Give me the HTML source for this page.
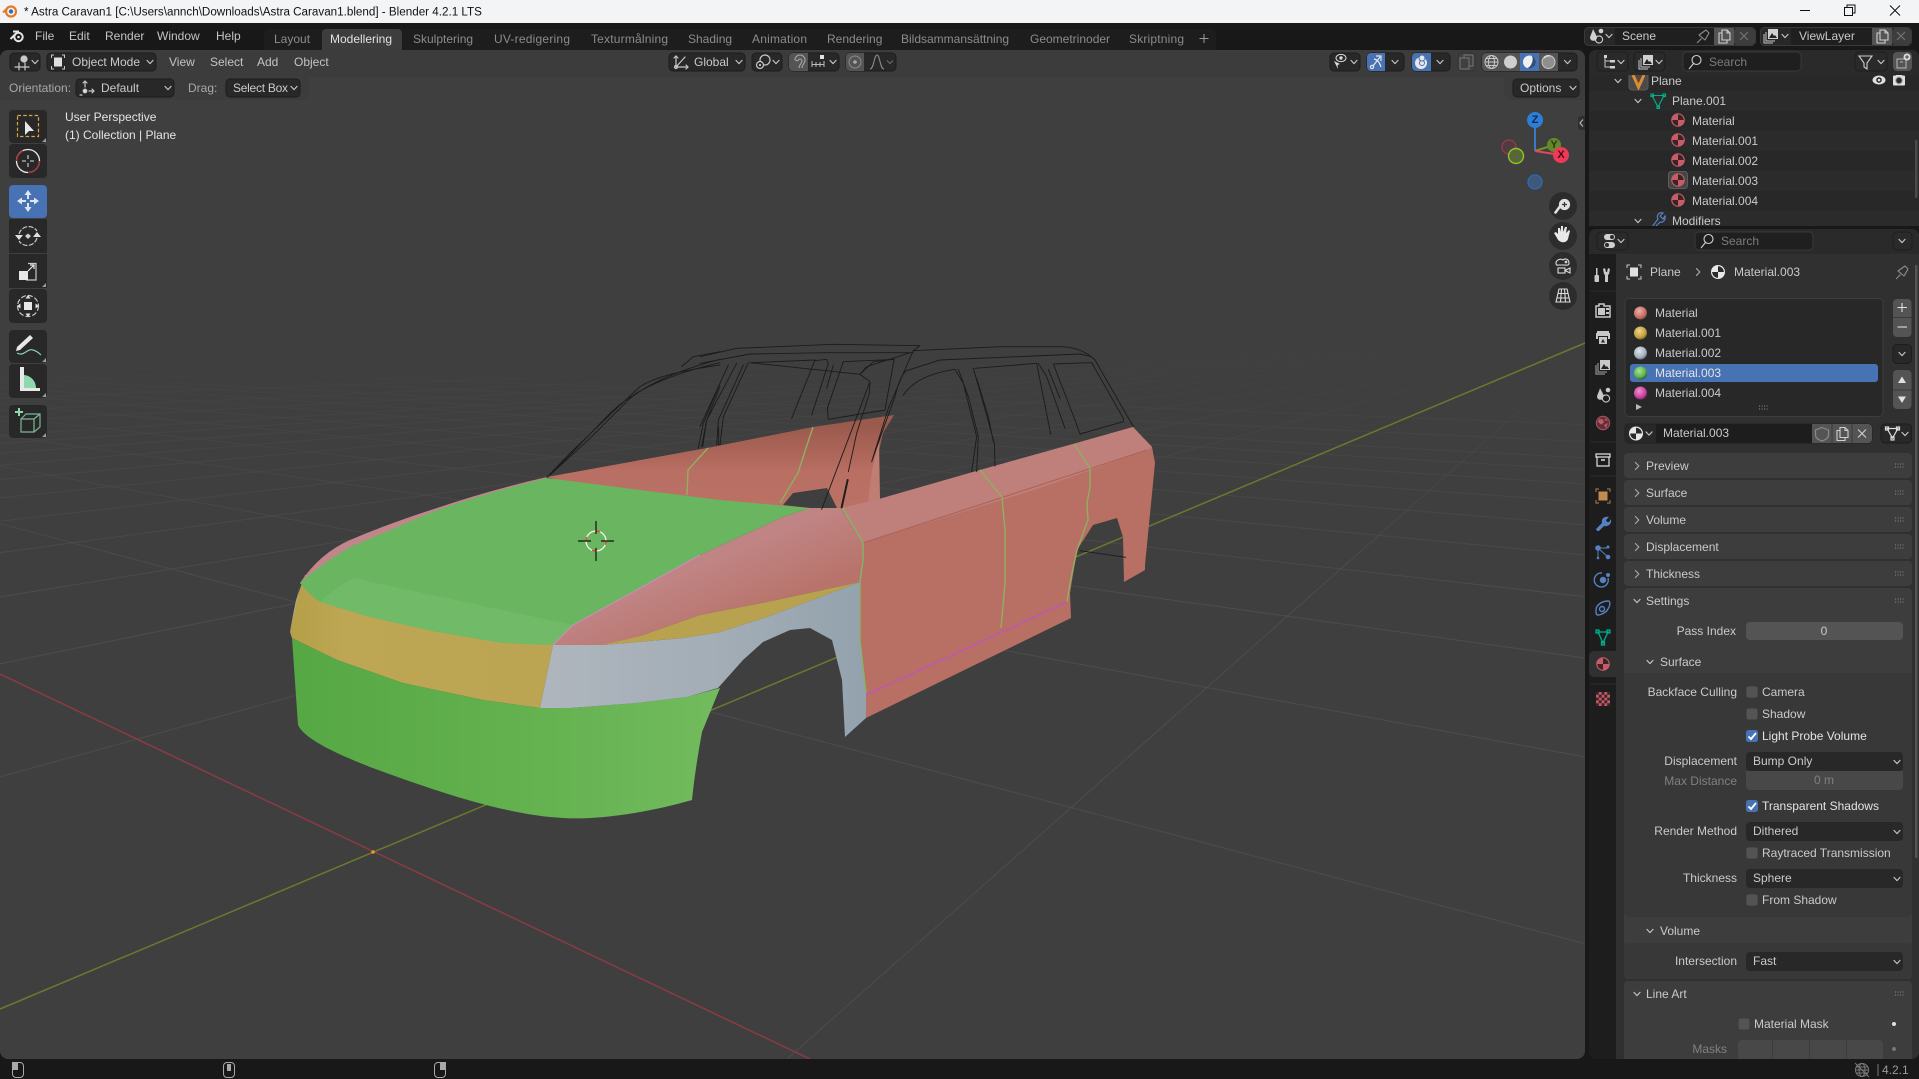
<!DOCTYPE html>
<html><head><meta charset="utf-8"><title>Blender</title>
<style>
html,body{margin:0;padding:0;background:#181818;overflow:hidden}
svg{display:block}
text{font-family:"Liberation Sans",sans-serif;font-size:12px;fill:#cacaca;dominant-baseline:central;white-space:pre}
.m{fill:#c4c4c4}.tb{fill:#8c8c8c}.ta{fill:#e2e2e2}.d{fill:#7c7c7c}.w{fill:#e4e4e4}.r{text-anchor:end}.c{text-anchor:middle}
.k{fill:#111;font-size:11.65px}
.i{fill:none;stroke:#c8c8c8;stroke-width:1.2;stroke-linecap:round;stroke-linejoin:round}
.ch{fill:none;stroke:#c4c4c4;stroke-width:1.2;stroke-linecap:round;stroke-linejoin:round}
.b{fill:#282828;stroke:#1d1d1d;stroke-width:1}
.f{fill:#c8c8c8}
.wr{fill:none;stroke:#1c1c1c;stroke-width:2.8;stroke-linejoin:round;stroke-linecap:round}
</style></head>
<body>
<svg xmlns="http://www.w3.org/2000/svg" width="1919" height="1079" viewBox="0 0 1919 1079">
<defs>
<path id="c" d="M-3-1.6L0 1.6L3-1.6" class="ch"/>
<path id="cr" d="M-1.6-3.5L1.8 0L-1.6 3.5" fill="none" stroke="#a8a8a8" stroke-width="1.2" stroke-linecap="round" stroke-linejoin="round"/>
<g id="mat"><circle r="6.8" fill="#c65c68"/><path d="M-5.6 0H0V5.6A5.600 5.600 0 0 1-5.6 0ZM0 0V-5.6A5.600 5.600 0 0 1 5.600 0Z" fill="#3a2427"/></g>
<g id="matw"><circle r="7" fill="#e8e8e8"/><path d="M-5.800 0H0V5.800A5.800 5.800 0 0 1-5.800 0ZM0 0V-5.800A5.800 5.800 0 0 1 5.800 0Z" fill="#2a2a2a"/></g>
<g id="grip" fill="#8a8a8a"><rect x="-5" y="-2" width="1" height="1"/><rect x="-2.5" y="-2" width="1" height="1"/><rect x="0" y="-2" width="1" height="1"/><rect x="2.5" y="-2" width="1" height="1"/><rect x="-5" y="1" width="1" height="1"/><rect x="-2.5" y="1" width="1" height="1"/><rect x="0" y="1" width="1" height="1"/><rect x="2.5" y="1" width="1" height="1"/></g>
<g id="copy"><path d="M-2-6H3L6-3V4H-2Z M3-6V-3H6 M-2-3H-5V7H3V4" fill="none" stroke="#cfcfcf" stroke-width="1.1"/></g>
<g id="cb"><rect x="-6" y="-6" width="12" height="12" rx="2.5" fill="#545454" stroke="#3a3a3a"/></g>
<g id="cbon"><rect x="-6" y="-6" width="12" height="12" rx="2.5" fill="#4772b3"/><path d="M-3.5 .5L-1 3L4-3" fill="none" stroke="#fff" stroke-width="1.8"/></g>
<g id="pin"><path d="M-6 7L-1.5 2.5 M-4 -1L3-6L6-3L2 4Z" fill="none" stroke="#8d8d8d" stroke-width="1.1" stroke-linejoin="round"/></g>
<g id="mini"><path d="M3 3V-1L-1 3Z" fill="#9a9a9a"/></g>
<linearGradient id="gf" gradientUnits="userSpaceOnUse" x1="0" y1="340" x2="0" y2="600"><stop offset="0" stop-color="#4a4a4a" stop-opacity="0"/><stop offset=".35" stop-color="#4a4a4a" stop-opacity=".45"/><stop offset="1" stop-color="#4c4c4c"/></linearGradient>
<linearGradient id="bump" gradientUnits="userSpaceOnUse" x1="292" y1="0" x2="720" y2="0"><stop offset="0" stop-color="#56a844"/><stop offset=".5" stop-color="#62b04e"/><stop offset="1" stop-color="#72bb5e"/></linearGradient>
<linearGradient id="silv" gradientUnits="userSpaceOnUse" x1="553" y1="0" x2="866" y2="0"><stop offset="0" stop-color="#aeb5bd"/><stop offset=".55" stop-color="#a2adb6"/><stop offset="1" stop-color="#93a2ad"/></linearGradient>
<linearGradient id="yel" gradientUnits="userSpaceOnUse" x1="290" y1="0" x2="553" y2="0"><stop offset="0" stop-color="#b59f48"/><stop offset=".2" stop-color="#bda654"/><stop offset="1" stop-color="#bba552"/></linearGradient>
<linearGradient id="farp" gradientUnits="userSpaceOnUse" x1="0" y1="425" x2="0" y2="510"><stop offset="0" stop-color="#9a5a4e"/><stop offset=".35" stop-color="#ad6659"/><stop offset=".55" stop-color="#b96f63"/><stop offset="1" stop-color="#ba7265"/></linearGradient>
<linearGradient id="fend" gradientUnits="userSpaceOnUse" x1="640" y1="500" x2="700" y2="640"><stop offset="0" stop-color="#c08485"/><stop offset=".55" stop-color="#c08484"/><stop offset="1" stop-color="#b8736a"/></linearGradient>
<linearGradient id="side" gradientUnits="userSpaceOnUse" x1="960" y1="470" x2="985" y2="540"><stop offset="0" stop-color="#c08280"/><stop offset=".72" stop-color="#bd7c78"/><stop offset=".78" stop-color="#b4695d"/><stop offset="1" stop-color="#b96f64"/></linearGradient>
<clipPath id="vp"><rect x="0" y="50" width="1585" height="1009" rx="8"/></clipPath>
<clipPath id="ol"><rect x="1589" y="75" width="330" height="151"/></clipPath>
</defs>

<!-- base -->
<rect width="1919" height="1079" fill="#181818"/>

<!-- title bar -->
<rect width="1919" height="23" fill="#f3f4f6"/>
<g transform="translate(10,11.5)"><path d="M-7 1L-1-5" stroke="#e8791e" stroke-width="2" fill="none"/><circle r="5" cx="1" fill="none" stroke="#e8791e" stroke-width="2.2"/><circle r="2.2" cx="1" fill="#2f6fb0"/></g>
<text x="24" y="12" class="k">* Astra Caravan1 [C:\Users\annch\Downloads\Astra Caravan1.blend] - Blender 4.2.1 LTS</text>
<path d="M1800 10.5H1810" stroke="#111" stroke-width="1"/>
<path d="M1844.5 7.5H1852.5V15.5H1844.5ZM1847 7.5V5H1855V13H1852.5" fill="none" stroke="#111" stroke-width="1"/>
<path d="M1890 5.5L1900 15.5M1900 5.5L1890 15.5" stroke="#111" stroke-width="1"/>

<!-- top bar -->
<g transform="translate(17,36)" fill="none" stroke="#e6e6e6"><circle cx="1.5" cy="1" r="4.2" stroke-width="2"/><path d="M-6.5 3L-1-2.5M-4-4.5H2" stroke-width="2"/><circle cx="1.5" cy="1" r="1.3" fill="#e6e6e6" stroke="none"/></g>
<text x="35" y="36" class="m">File</text><text x="69" y="36" class="m">Edit</text><text x="105" y="36" class="m">Render</text><text x="157" y="36" class="m">Window</text><text x="216" y="36" class="m">Help</text>
<path d="M264 50V33a4 4 0 0 1 4-4H1212a4 4 0 0 1 4 4V50Z" fill="#1d1d1d"/>
<path d="M322 50V33a4 4 0 0 1 4-4H398a4 4 0 0 1 4 4V50Z" fill="#3d3d3d"/>
<text x="274" y="39" class="tb">Layout</text><text x="330" y="39" class="ta">Modellering</text><text x="413" y="39" class="tb">Skulptering</text><text x="494" y="39" class="tb" textLength="76">UV-redigering</text><text x="591" y="39" class="tb" textLength="77">Texturmålning</text><text x="688" y="39" class="tb">Shading</text><text x="752" y="39" class="tb" textLength="55">Animation</text><text x="827" y="39" class="tb">Rendering</text><text x="901" y="39" class="tb">Bildsammansättning</text><text x="1030" y="39" class="tb">Geometrinoder</text><text x="1129" y="39" class="tb" textLength="55">Skriptning</text>
<path d="M1199.5 38.5h9M1204 34v9" stroke="#9a9a9a" stroke-width="1"/>

<!-- scene / viewlayer -->
<rect x="1584.5" y="27.5" width="171" height="18" rx="4" fill="#282828" stroke="#3a3a3a"/>
<rect x="1615" y="28" width="140" height="17" fill="#1f1f1f"/>
<rect x="1714" y="28" width="20" height="17" fill="#545454"/><rect x="1734" y="28" width="21" height="17" rx="3" fill="#3d3d3d"/>
<g transform="translate(1596,36)"><path d="M-3-7C-1-3 1 0 1 2A3.6 3.6 0 0 1-6 2C-6 0-4-3-3-7Z" fill="#d0d0d0"/><circle cx="5" cy="-5" r="2.3" fill="#d0d0d0"/><circle cx="3" cy="3.5" r="3.6" fill="none" stroke="#d0d0d0" stroke-width="1.1"/></g><use href="#c" x="1609" y="36"/>
<text x="1622" y="36">Scene</text><use href="#pin" x="1703" y="36"/><use href="#copy" x="1724" y="36"/>
<path d="M1740 32l8 8m0-8l-8 8" stroke="#767676" stroke-width="1.1"/>
<rect x="1760.5" y="27.5" width="151" height="18" rx="4" fill="#282828" stroke="#3a3a3a"/>
<rect x="1791" y="28" width="120" height="17" fill="#1f1f1f"/>
<rect x="1872" y="28" width="20" height="17" fill="#545454"/><rect x="1892" y="28" width="19" height="17" rx="3" fill="#3d3d3d"/>
<g transform="translate(1772,36)"><rect x="-4" y="-7" width="10" height="10" fill="#d0d0d0"/><path d="M-3 2L0-3L2 0L3-1L5 2Z" fill="#222"/><path d="M-6-4V5H3M-8-2V7H1" fill="none" stroke="#c8c8c8"/></g><use href="#c" x="1785" y="36"/>
<text x="1799" y="36">ViewLayer</text><use href="#copy" x="1882" y="36"/>
<path d="M1897 32l8 8m0-8l-8 8" stroke="#767676" stroke-width="1.1"/>

<!-- 3D viewport -->
<g clip-path="url(#vp)">
<rect x="0" y="50" width="1585" height="1009" fill="#3f3f3f"/>
<g stroke="url(#gf)" stroke-width="1" fill="none">
<path d="M1604 336L787 1059M1604 336L1694 1059M1604 336L2601 1059M1604 336L-1027 1059M1604 336L-1934 1059M1604 336L-2841 1059M1604 336L-3748 1059M1604 336L-4655 1059M1604 336L-5562 1059M1604 336L-6469 1059M1604 336L-7376 1059M1604 336L-8283 1059M1604 336L-9190 1059M1604 336L-10097 1059M1604 336L-12000 1059M1604 336L-14000 1059M1604 336L-17000 1059"/>
<path d="M-708 336L-401 1059M-708 336L2020 1059M-708 336L3230 1059M-708 336L4440 1059M-708 336L5650 1059M-708 336L6860 1059M-708 336L8070 1059M-708 336L9280 1059M-708 336L10490 1059M-708 336L11700 1059M-708 336L12900 1059M-708 336L15000 1059M-708 336L18000 1059"/>
</g>
<path d="M0 674L810 1059" stroke="#8c3a44" stroke-width="1.5"/>
<path d="M0 1009L1585 343" stroke="#6a7a2c" stroke-width="1.5"/>
<circle cx="373" cy="852" r="1.8" fill="#e89a2a"/>

<!-- car: far inner panel -->
<path d="M547 477L707 448L813 427L894 415L883 433L878 455L879 499L840 508L810 510L720 505L600 492Z" fill="url(#farp)"/>
<path d="M879 440L880 499L868 502L872 470Z" fill="#c07d72"/>
<path d="M783 505L793 493L827 488L837 508L810 508Z" fill="#3f3f3f"/>
<!-- bumper yellow (under hood) -->
<path d="M305 575L340 590L450 620L560 635L553 645L540 708L483 700L403 683L337 660L292 638L290 632L296 600Z" fill="url(#yel)"/>
<!-- hood -->
<path d="M547 477Q490 490 437 508Q390 523 350 540Q320 553 300 583L320 602L400 600L520 510Z" fill="#c1868c"/>
<path d="M547 478Q490 492 437 510Q390 530 350 547Q320 565 300 583Q308 594 320 602L370 617L437 632L503 643L553 645L573 625L700 555L783 517L810 508L720 500L640 490Z" fill="#6ab560"/>
<path d="M353 578L573 625L553 645L503 643L437 632L370 617L320 602Q335 588 353 578Z" fill="#71ba67"/>
<!-- silver sliver -->
<path d="M300 585L290 632L294 610Z" fill="#a6b1ba"/>
<!-- bumper green -->
<path d="M292 638L337 660L403 683L483 700L540 708L570 708L637 703L687 697L720 688L702 732Q695 770 692 800C640 815 590 820 563 818C500 815 420 785 370 767C340 755 305 740 298 725Z" fill="url(#bump)"/>
<!-- silver fender -->
<path d="M553 645L603 645L683 638L720 632L767 617L860 582L860 640L866 693L866 718L845 737L842 680L832 640L810 628L790 630L763 642L743 660L718 688L687 697L637 703L570 708L540 708Z" fill="url(#silv)"/>
<!-- pink fender -->
<path d="M553 645L573 625L700 555L783 517L810 508L840 508L863 543L863 560L860 582L767 602L700 615L640 636L607 645Z" fill="url(#fend)"/>
<!-- yellow strip -->
<path d="M603 645L640 636L700 615L767 602L860 582L767 617L720 632L683 638Z" fill="#b9a24f"/>
<path d="M553 645L573 625L700 555" fill="none" stroke="#cf8bc0" stroke-width="1"/>
<!-- side panel -->
<path d="M840 508L879 499L980 470L1073 444L1133 427L1152 447L1155 463L1145 565L1145 570L1124 582L1123 537L1117 518L1093 525L1077 550L1070 593L1071 618L866 718L866 693L860 640L860 582L863 543Z" fill="#b86f64"/>
<path d="M840 508L879 499L980 470L1073 444L1133 427L1152 447L1147 450L1040 488L863 543Z" fill="#bf7f7b"/>
<path d="M863 543L1147 450" stroke="#ad6559" stroke-width="1.2"/>
<!-- seams -->
<g fill="none" stroke="#90b060" stroke-width="1.4">
<path d="M708 448L688 470L687 495"/><path d="M813 427L807 445L798 473L780 503"/>
<path d="M843 508L863 543L863 560L860 582L860 640L866 693" stroke="#84b564"/>
<path d="M980 470L1002 497L1005 530L1005 583L1001 628"/>
<path d="M1074 444L1090 468L1090 487L1087 503L1088 520L1077 550L1070 583L1067 602"/>
</g>
<path d="M866 695L1067 602" stroke="#bf58ae" stroke-width="1.6"/>
<!-- wireframe far / near -->
<g transform="translate(700 330) scale(.33333)" class="wr">
<path d="M0 80L110 55L400 43L660 47L640 62M0 100L150 72L380 68L640 68M640 62L900 50L1090 50Q1150 55 1185 90L1300 290M620 122L720 90L1140 72L1175 80"/>
<path d="M640 62L610 130L565 235L515 395M620 122Q600 135 585 200L545 310L515 395"/>
<path d="M610 195Q650 135 765 118L790 160L830 320L815 425M775 118L805 200L835 320L830 425"/>
<path d="M820 115L850 220L883 340L885 408M830 145L865 260L880 335"/>
<path d="M825 115L1010 100L1052 312M1015 100L1040 140L1095 295M1045 118L1080 205"/>
<path d="M1060 102L1175 98L1270 265L1270 275L1140 312L1125 270L1060 102"/>
<path d="M480 133L520 95L583 88L580 100L555 240L385 268L382 235L430 95L583 88"/>
<path d="M480 133L510 155L508 190L470 310L445 425M510 155L365 538M480 133L500 110L630 68"/>
<path d="M480 133L150 98L345 90L275 265M345 92L380 88L385 100L335 255M400 105L380 175"/>
<path d="M145 98L70 260L60 345M130 105L55 270L50 345M110 100L20 270L5 350M85 105L0 290"/>
<path d="M443 450L425 532" stroke-width="6" stroke-dasharray="6 3"/>
<path d="M1140 662L1277 682"/>
</g>
<g transform="translate(270 330) scale(.33333)" class="wr">
<path d="M832 440L900 370L1040 235L1110 170Q1170 130 1350 105M840 435L960 325L1080 205Q1170 135 1350 88M832 440L890 385L1020 250Q1120 150 1350 98"/>
<path d="M1235 110L1270 80L1350 65M1350 160L1300 280L1285 355M1350 170L1310 270L1298 350M1346 290V345"/>
</g>
<!-- 3D cursor -->
<g transform="translate(596,541)">
<circle r="10" fill="none" stroke="#f4f4f4" stroke-width="1.3"/><circle r="10" fill="none" stroke="#e0492e" stroke-width="1.4" stroke-dasharray="3.9 11.8"/>
<path d="M0-20V-7M0 7V20M-18 0H-5M5 0H18" stroke="#101010" stroke-width="1.2"/>
</g>

<!-- header overlay -->
<rect x="0" y="50" width="1585" height="27" fill="#3c3c3c"/>
<path d="M0 77H309V92a8 8 0 0 1-8 8H0Z" fill="#3c3c3c"/>
<path d="M1585 77H1504V92a8 8 0 0 0 8 8H1585Z" fill="#3c3c3c"/>
</g>

<!-- header widgets -->
<rect x="10" y="53" width="30" height="18" rx="4" class="b"/>
<g transform="translate(22,62)" class="i"><path d="M-7 5H7M-3 1V8M3 1V8"/><circle cx="2" cy="-3" r="3" fill="#c8c8c8"/></g><use href="#c" x="35" y="62"/>
<rect x="47" y="53" width="109" height="18" rx="4" class="b"/>
<g transform="translate(58,62)"><rect x="-4" y="-4.5" width="8" height="9" fill="#e0e0e0"/><path d="M-4-7H-6.5V-4M4-7H6.5V-4M-4 7H-6.5V4M4 7H6.5V4" fill="none" stroke="#c8c8c8"/></g>
<text x="72" y="62">Object Mode</text><use href="#c" x="150" y="62"/>
<text x="169" y="62" class="m">View</text><text x="210" y="62" class="m">Select</text><text x="257" y="62" class="m">Add</text><text x="294" y="62" class="m">Object</text>

<text x="9" y="88" style="fill:#a8a8a8">Orientation:</text>
<rect x="76" y="79" width="98" height="18" rx="4" class="b"/>
<g transform="translate(86,88)" class="i" stroke-width="1"><circle cx="-1" cy="3" r="1.8" fill="#e0e0e0"/><path d="M-1-1V-7M-3-5L-1-7L1-5M3 3H8M6 1L8 3L6 5M-6 7H-4"/></g>
<text x="101" y="88">Default</text><use href="#c" x="168" y="88"/>
<text x="188" y="88" style="fill:#a8a8a8">Drag:</text>
<rect x="226" y="79" width="74" height="18" rx="4" class="b"/>
<text x="233" y="88" textLength="55">Select Box</text><use href="#c" x="294" y="88"/>

<rect x="669" y="53" width="76" height="18" rx="4" class="b"/>
<g transform="translate(681,62)" class="i"><path d="M-5-6V5H7M-5 5L4-5"/><path d="M-7-4L-5-6L-3-4M5 3L7 5L5 7"/><circle cx="-5" cy="5" r="1.5"/></g>
<text x="694" y="62">Global</text><use href="#c" x="739" y="62"/>
<rect x="752" y="53" width="30" height="18" rx="4" class="b"/>
<g transform="translate(763,62)" class="i"><circle cx="2" cy="-2" r="5"/><circle cx="-3" cy="3" r="3.500" fill="#282828"/><circle cx="-3" cy="3" r="1.100" fill="#c8c8c8" stroke="none"/></g><use href="#c" x="776" y="62"/>
<rect x="789" y="53" width="50" height="18" rx="4" class="b"/>
<path d="M793 53H808V71H793a4 4 0 0 1-4-4V57a4 4 0 0 1 4-4Z" fill="#545454"/>
<path d="M795 60a5 5 0 0 1 10 0c0 3-3 5-3 8M798 61a2 2 0 0 1 4 0c0 2-3 4-3 7M795 60l3 1" fill="none" stroke="#a8a8a8" stroke-width="1.1"/>
<g stroke="#bcbcbc" stroke-width="1"><path d="M812 64.5H824M812 61V67M816 62V67M820 62V67M824 61V67"/></g><rect x="820" y="55" width="4" height="4" fill="#e0e0e0"/>
<use href="#c" x="833" y="62"/>
<rect x="846" y="53" width="50" height="18" rx="4" class="b"/>
<path d="M850 53H864V71H850a4 4 0 0 1-4-4V57a4 4 0 0 1 4-4Z" fill="#545454"/>
<circle cx="855" cy="62" r="6" fill="none" stroke="#8c8c8c"/><circle cx="855" cy="62" r="1.8" fill="#a8a8a8"/>
<path d="M870 69C874 69 874 55 877 55C880 55 880 69 884 69" fill="none" stroke="#8c8c8c" stroke-width="1.1"/>
<path d="M887 60.5L890 63.5L893 60.5" fill="none" stroke="#6c6c6c" stroke-width="1.1"/>

<rect x="1330" y="53" width="30" height="18" rx="4" class="b"/>
<g transform="translate(1339,62)"><path d="M-5-1L1 2L-1.5 3L-1 7Z" fill="#e0e0e0"/><ellipse cx="2" cy="-4" rx="5" ry="3.6" fill="none" stroke="#d8d8d8"/><circle cx="2" cy="-4" r="1.7" fill="#d8d8d8"/></g><use href="#c" x="1354" y="62"/>
<rect x="1367" y="53" width="37" height="18" rx="4" class="b"/>
<path d="M1371 53H1385V71H1371a4 4 0 0 1-4-4V57a4 4 0 0 1 4-4Z" fill="#4772b3"/>
<g fill="none" stroke="#e8e8e8" stroke-width="1.2"><circle cx="1372" cy="67" r="1.6"/><path d="M1373 66L1380 57M1376 56H1381V61M1374 59Q1379 60 1381 67"/></g><use href="#c" x="1395" y="62"/>
<rect x="1412" y="53" width="38" height="18" rx="4" class="b"/>
<path d="M1416 53H1431V71H1416a4 4 0 0 1-4-4V57a4 4 0 0 1 4-4Z" fill="#4772b3"/>
<circle cx="1421" cy="63" r="6" fill="#e8e8e8"/><circle cx="1422" cy="63" r="2.5" fill="none" stroke="#4772b3"/><circle cx="1422" cy="58" r="3" fill="#e8e8e8" stroke="#4772b3"/><use href="#c" x="1440" y="62"/>
<rect x="1458" y="53" width="17" height="18" rx="4" fill="#404040" stroke="#333"/>
<path d="M1464 58V55H1473V66H1469M1460 58H1469V69H1460Z" fill="none" stroke="#767676"/>
<rect x="1482" y="53" width="95" height="18" rx="4" class="b"/>
<path d="M1486 53H1520V71H1486a4 4 0 0 1-4-4V57a4 4 0 0 1 4-4Z" fill="#545454"/>
<rect x="1520" y="53" width="19" height="18" fill="#4772b3"/><rect x="1539" y="53" width="19" height="18" fill="#545454"/>
<g fill="none" stroke="#c8c8c8" stroke-width="1"><circle cx="1491.5" cy="62" r="6.5"/><ellipse cx="1491.5" cy="62" rx="3" ry="6.5"/><path d="M1485 62H1498M1486 58.5H1497M1486 65.5H1497"/></g>
<circle cx="1510.5" cy="62" r="6.5" fill="#cfcfcf"/>
<circle cx="1529.5" cy="62" r="6.5" fill="#f0f0f0"/><path d="M1529.5 55.5A6.5 6.5 0 0 1 1529.5 68.5C1533 66 1533 58 1529.5 55.5Z" fill="#2f4f80" transform="rotate(20 1529.5 62)"/>
<circle cx="1548.5" cy="62" r="6.5" fill="#8e8e8e" stroke="#c8c8c8"/><path d="M1544 58A6 6 0 0 1 1550 56" stroke="#e0e0e0" stroke-width="1.4" fill="none"/>
<use href="#c" x="1567.5" y="62"/>
<rect x="1513" y="79" width="66" height="18" rx="4" class="b"/>
<text x="1520" y="88">Options</text><use href="#c" x="1573" y="88"/>

<!-- overlay text -->
<text x="65" y="117" class="w">User Perspective</text>
<text x="65" y="135" class="w">(1) Collection | Plane</text>

<!-- toolbar -->
<rect x="9" y="110" width="38" height="33" rx="4" fill="#282828"/><rect x="9" y="144" width="38" height="34" rx="4" fill="#282828"/>
<rect x="9" y="185" width="38" height="33" rx="4" fill="#4772b3"/><rect x="9" y="219" width="38" height="34" fill="#282828"/><rect x="9" y="254" width="38" height="34" fill="#282828"/><rect x="9" y="289" width="38" height="34" rx="4" fill="#282828"/>
<rect x="9" y="330" width="38" height="33" rx="4" fill="#282828"/><rect x="9" y="364" width="38" height="34" rx="4" fill="#282828"/><rect x="9" y="405" width="38" height="33" rx="4" fill="#282828"/>
<!-- select -->
<rect x="17.5" y="115.5" width="21" height="21" fill="none" stroke="#d8a548" stroke-width="1.2" stroke-dasharray="3.5 2.2"/>
<path d="M25 121V135L29 131H34Z" fill="#e8e8e8"/><use href="#mini" x="43" y="139"/>
<!-- cursor -->
<g transform="translate(28,161)" fill="none"><circle r="11.5" stroke="#e8e8e8" stroke-width="1.3"/><path d="M11.5 0A11.5 11.5 0 0 1 0 11.5M-11.5 0A11.5 11.5 0 0 1-5 -10" stroke="#a43038" stroke-width="1.4"/><path d="M-6 0H-2M2 0H6M0-6V-2M0 2V6" stroke="#b8b8b8" stroke-width="1.3"/></g>
<!-- move -->
<g transform="translate(28,201)" fill="#dfe7f2"><path d="M0-11L-3.5-6H3.5ZM0 11L-3.5 6H3.5ZM-11 0L-6-3.5V3.5ZM11 0L6-3.5V3.5Z"/><path d="M-1-6H1V-2H-1ZM-1 6H1V2H-1ZM-6-1V1H-2V-1ZM6-1V1H2V-1Z"/></g>
<!-- rotate -->
<g transform="translate(28,236)"><path d="M-3-3L0-5.5L3-3L0 0Z" fill="#d0d0d0" transform="translate(0,3)"/><path d="M-9-2A10 10 0 0 1 9-5M9 2A10 10 0 0 1-9 5" fill="none" stroke="#c8c8c8" stroke-width="1.2" stroke-dasharray="5 1.5"/><path d="M-13-1H-5L-9 4ZM5 1H13L9-4Z" fill="#e0e0e0"/></g>
<!-- scale -->
<path d="M28 263.5H36V280H26" fill="none" stroke="#c8c8c8" stroke-width="1.2"/><rect x="19" y="271" width="9" height="9" fill="#e8e8e8"/><path d="M28 271L34 265M30 265H34V269" fill="none" stroke="#e8e8e8" stroke-width="1.2"/><use href="#mini" x="43" y="284"/>
<!-- transform -->
<g transform="translate(28,306)"><circle r="10.5" fill="none" stroke="#c8c8c8" stroke-width="1.2" stroke-dasharray="5 2"/><rect x="-4" y="-4" width="8" height="8" fill="#e8e8e8"/><path d="M0-11L-2.5-7.5H2.5ZM0 11L-2.5 7.5H2.5ZM-11 0L-7.5-2.5V2.5ZM11 0L7.5-2.5V2.5Z" fill="#e0e0e0"/></g>
<!-- annotate -->
<path d="M17 347L30 335L33 338L20 350L16 351Z" fill="#e8e8e8"/><path d="M17 353C24 357 27 348 33 350C37 351 39 353 41 355" fill="none" stroke="#8ed0a8" stroke-width="1.2"/><use href="#mini" x="43" y="359"/>
<!-- measure -->
<path d="M20 367H24V388H40V391H20Z" fill="#e8e8e8"/><path d="M24 375A13 13 0 0 1 36 388H24Z" fill="#8ed8ae"/><use href="#mini" x="43" y="394"/>
<!-- add -->
<path d="M21 419H34V432H21ZM21 419L26 414H40V427L34 432M34 419L40 414" fill="none" stroke="#7bb898" stroke-width="1.2"/><path d="M15 412H23M19 408V416" stroke="#8ed8ae" stroke-width="2"/><use href="#mini" x="43" y="434"/>

<!-- gizmo -->
<path d="M1535 151V120" stroke="#3a78c8" stroke-width="2"/><path d="M1535 151L1554 145" stroke="#6a9a20" stroke-width="2"/><path d="M1535 151L1561 155" stroke="#e8455f" stroke-width="2"/>
<circle cx="1509" cy="147" r="7" fill="#4e3c40" stroke="#9a3a4a" stroke-width="1.3"/>
<circle cx="1554" cy="145" r="7" fill="#65892a"/><text x="1554" y="145" class="c" style="fill:#2c3a10;font-weight:bold;font-size:11px">Y</text>
<circle cx="1516" cy="156" r="7.5" fill="#586638" stroke="#8cc520" stroke-width="1.4"/>
<circle cx="1561" cy="155" r="8" fill="#ee3a58"/><text x="1561" y="155" class="c" style="fill:#4a0d18;font-weight:bold;font-size:11px">X</text>
<circle cx="1535" cy="120" r="8" fill="#2e7ed8"/><text x="1535" y="120" class="c" style="fill:#0c2a50;font-weight:bold;font-size:11px">Z</text>
<circle cx="1535" cy="182" r="7" fill="#3f5878" stroke="#2e6ab8" stroke-width="1.3"/>
<!-- nav buttons -->
<g fill="#2c2c2c"><circle cx="1563" cy="206" r="14"/><circle cx="1563" cy="236" r="14"/><circle cx="1563" cy="266" r="14"/><circle cx="1563" cy="296" r="14"/></g>
<g transform="translate(1563,206)"><circle cx="1.5" cy="-1.5" r="5.6" fill="#e0e0e0"/><path d="M-2-1L-7.5 6.5" stroke="#e0e0e0" stroke-width="2.6" stroke-linecap="round"/><path d="M-1-1.5H4M1.5-4V1" stroke="#333" stroke-width="1.2"/></g>
<path d="M1557 238L1554 233L1556 232L1558 234V228L1560 228L1561 232V226H1563V232L1565 227H1567L1566 233L1569 230L1570 231L1568 239C1566 244 1559 243 1557 238Z" fill="#e8e8e8"/>
<g transform="translate(1563,266)" fill="none" stroke="#dcdcdc" stroke-width="1.1"><path d="M-7-3C-7-6-2-8 0-6C2-8 6-7 6-3C6 0 3-1 0-1H-4C-6-1-7 0-7-3Z"/><circle cx="3" cy="-4" r=".8"/><rect x="-5" y="2" width="7" height="5"/><path d="M2 4.500L7 2V7L2 4.500Z"/></g>
<g transform="translate(1563,296)" fill="none" stroke="#dcdcdc" stroke-width="1.1"><path d="M-4-7H4L7 6H-7ZM-1.500-7L-2.500 6M1.500-7L2.500 6M-5-2.500H5M-6 2H6"/></g>
<!-- sidebar arrow -->
<path d="M1585 116H1581a3 3 0 0 0-3 3V127a3 3 0 0 0 3 3H1585Z" fill="#2f2f2f"/><path d="M1583 119.500L1580 123L1583 126.500" fill="none" stroke="#b4b4b4" stroke-width="1.2"/>

<!-- OUTLINER -->
<rect x="1589" y="50" width="330" height="176" rx="7" fill="#282828"/>
<rect x="1589" y="50" width="330" height="25" rx="7" fill="#2a2a2a"/>
<g clip-path="url(#ol)">
<rect x="1589" y="91" width="330" height="20" fill="#2b2b2b"/><rect x="1589" y="131" width="330" height="20" fill="#2b2b2b"/><rect x="1589" y="171" width="330" height="20" fill="#2b2b2b"/><rect x="1589" y="211" width="330" height="20" fill="#2b2b2b"/>
<use href="#c" x="1618" y="81"/><use href="#c" x="1638" y="101"/><use href="#c" x="1638" y="221"/>
<rect x="1629" y="72" width="19" height="18" rx="3" fill="#4a4a4a" stroke="#5a5a5a"/><path d="M1633 75L1638.5 87L1644 75" fill="none" stroke="#e08a33" stroke-width="3"/>
<text x="1651" y="81">Plane</text>
<g fill="none" stroke="#00b08a" stroke-width="1.1"><path d="M1652 95.500H1664L1658 107Z"/><rect x="1651" y="94" width="2.500" height="2.500"/><rect x="1663" y="94" width="2.500" height="2.500"/><rect x="1657" y="106" width="2.500" height="2.500"/></g>
<text x="1672" y="101">Plane.001</text>
<use href="#mat" x="1678" y="120"/><text x="1692" y="121">Material</text>
<use href="#mat" x="1678" y="140"/><text x="1692" y="141">Material.001</text>
<use href="#mat" x="1678" y="160"/><text x="1692" y="161">Material.002</text>
<rect x="1668.500" y="171.500" width="19" height="17" rx="3" fill="#454545" stroke="#5c5c5c"/><use href="#mat" x="1678" y="180"/><text x="1692" y="181">Material.003</text>
<use href="#mat" x="1678" y="200"/><text x="1692" y="201">Material.004</text>
<g transform="translate(1657,220)"><path d="M-5 7L1-1C-1-5 2-8 6-7L3-4L6-1L8-4C9 0 6 3 3 2L-3 8Z" fill="none" stroke="#5680c2" stroke-width="1.2"/></g>
<text x="1672" y="221">Modifiers</text>
<g transform="translate(1879,80)"><ellipse rx="6.500" ry="4.500" fill="#e0e0e0"/><circle r="2.800" fill="#2a2a2a"/><circle r="1.300" fill="#e0e0e0"/></g>
<g transform="translate(1899,80)"><rect x="-6" y="-4.500" width="12" height="10" rx="1" fill="#e0e0e0"/><rect x="-3" y="-6" width="6" height="2" fill="#e0e0e0"/><circle cy=".5" r="3.200" fill="#2a2a2a" stroke="#999"/></g>
</g>
<rect x="1915" y="140" width="2.500" height="58" rx="1" fill="#4a4a4a"/>
<rect x="1597" y="52" width="31" height="19" rx="4" fill="#2a2a2a" stroke="#1d1d1d"/>
<g fill="#d0d0d0"><rect x="1604" y="55" width="3" height="3"/><rect x="1610" y="60" width="5" height="2.500"/><rect x="1610" y="66" width="5" height="2.500"/></g><path d="M1605 58V67H1610M1605 61H1610" fill="none" stroke="#c8c8c8"/><use href="#c" x="1621" y="62"/>
<rect x="1634" y="52" width="31" height="19" rx="4" fill="#2a2a2a" stroke="#1d1d1d"/>
<g transform="translate(1647,62)"><rect x="-4" y="-7" width="10" height="10" fill="#d0d0d0"/><path d="M-3 2L0-3L2 0L3-1L5 2Z" fill="#222"/><path d="M-6-4V5H3M-8-2V7H1" fill="none" stroke="#c8c8c8"/></g><use href="#c" x="1659" y="62"/>
<rect x="1683" y="52" width="118" height="19" rx="4" fill="#1f1f1f" stroke="#3a3a3a"/>
<g transform="translate(1695,62)" fill="none" stroke="#cfcfcf" stroke-width="1.1"><circle cx="1.500" cy="-2" r="4.500"/><path d="M-1.500 1.500L-6 7"/></g><text x="1709" y="62" class="d">Search</text>
<rect x="1855" y="52" width="32" height="19" rx="4" fill="#2a2a2a" stroke="#1d1d1d"/>
<path d="M1859 56H1872L1867 63V69L1864 67V63Z" fill="none" stroke="#cfcfcf" stroke-width="1.1"/><use href="#c" x="1881" y="62"/>
<rect x="1893" y="52" width="19" height="19" rx="4" fill="#545454"/>
<path d="M1897 59H1906V68H1897ZM1900 62H1903" fill="none" stroke="#b8b8b8"/><circle cx="1907" cy="57" r="3.500" fill="#dcdcdc"/><path d="M1905 57H1909M1907 55V59" stroke="#444"/>

<!-- PROPERTIES -->
<rect x="1589" y="229" width="330" height="830" rx="7" fill="#303030"/>
<path d="M1589 254H1616V1059H1596a7 7 0 0 1-7-7Z" fill="#1d1d1d"/>
<path d="M1589 236a7 7 0 0 1 7-7H1912a7 7 0 0 1 7 7V254H1589Z" fill="#2a2a2a"/>
<rect x="1597" y="232" width="31" height="18" rx="4" fill="#2a2a2a" stroke="#1d1d1d"/>
<g fill="#d0d0d0"><rect x="1604" y="234" width="11" height="6" rx="3"/><rect x="1604" y="242" width="11" height="6" rx="3"/><circle cx="1612" cy="237" r="2" fill="#2a2a2a"/><circle cx="1607" cy="245" r="2" fill="#2a2a2a"/></g><use href="#c" x="1621" y="241"/>
<rect x="1695" y="232" width="118" height="18" rx="4" fill="#1f1f1f" stroke="#3a3a3a"/>
<g transform="translate(1707,241)" fill="none" stroke="#cfcfcf" stroke-width="1.1"><circle cx="1.500" cy="-2" r="4.500"/><path d="M-1.500 1.500L-6 7"/></g><text x="1721" y="241" class="d">Search</text>
<rect x="1893" y="232" width="19" height="18" rx="4" fill="#2a2a2a" stroke="#1d1d1d"/><use href="#c" x="1902" y="241"/>

<!-- breadcrumb -->
<g transform="translate(1634,272)"><rect x="-4" y="-4.500" width="8" height="9" fill="#e0e0e0"/><path d="M-4-7H-7V-4M4-7H7V-4M-4 7H-7V4M4 7H7V4" fill="none" stroke="#c8c8c8"/></g>
<text x="1650" y="272">Plane</text><use href="#cr" x="1698" y="272"/><use href="#matw" x="1718" y="272"/><text x="1734" y="272">Material.003</text><use href="#pin" x="1902" y="272"/>

<!-- material list -->
<rect x="1625" y="298.500" width="258" height="118" rx="4" fill="#282828" stroke="#3d3d3d"/>
<rect x="1630" y="364" width="248" height="18" rx="3" fill="#4772b3"/>
<defs>
<radialGradient id="s1" cx=".4" cy=".35" r=".7"><stop offset="0" stop-color="#f0b0a8"/><stop offset=".7" stop-color="#c66e66"/><stop offset="1" stop-color="#7a4540"/></radialGradient>
<radialGradient id="s2" cx=".4" cy=".35" r=".7"><stop offset="0" stop-color="#f0d58a"/><stop offset=".7" stop-color="#c39f3e"/><stop offset="1" stop-color="#6e5a25"/></radialGradient>
<radialGradient id="s3" cx=".4" cy=".35" r=".7"><stop offset="0" stop-color="#dfe5ea"/><stop offset=".7" stop-color="#a3b0bb"/><stop offset="1" stop-color="#5c666e"/></radialGradient>
<radialGradient id="s4" cx=".4" cy=".35" r=".7"><stop offset="0" stop-color="#a8e590"/><stop offset=".7" stop-color="#5cb04a"/><stop offset="1" stop-color="#1f4d1a"/></radialGradient>
<radialGradient id="s5" cx=".4" cy=".35" r=".7"><stop offset="0" stop-color="#f090d0"/><stop offset=".7" stop-color="#c9409e"/><stop offset="1" stop-color="#70235a"/></radialGradient>
</defs>
<circle cx="1640.500" cy="313" r="6.500" fill="url(#s1)"/><text x="1655" y="313">Material</text>
<circle cx="1640.500" cy="333" r="6.500" fill="url(#s2)"/><text x="1655" y="333">Material.001</text>
<circle cx="1640.500" cy="353" r="6.500" fill="url(#s3)"/><text x="1655" y="353">Material.002</text>
<circle cx="1640.500" cy="373" r="6.500" fill="url(#s4)"/><text x="1655" y="373" class="w">Material.003</text>
<circle cx="1640.500" cy="393" r="6.500" fill="url(#s5)"/><text x="1655" y="393">Material.004</text>
<path d="M1636 404L1642 407L1636 410Z" fill="#b8b8b8"/><g transform="translate(1764,407.500)" fill="#9a9a9a"><use href="#grip"/></g>

<rect x="1893" y="299" width="18.500" height="38" rx="4" fill="#545454"/><path d="M1893 317.500H1911.500" stroke="#3a3a3a"/>
<path d="M1897.500 307.500H1907M1902 303V312" stroke="#e0e0e0" stroke-width="1.1"/><path d="M1897.500 327H1907" stroke="#e0e0e0" stroke-width="1.1"/>
<rect x="1893" y="344.500" width="18.500" height="19" rx="4" fill="#282828" stroke="#1d1d1d"/><use href="#c" x="1902" y="354"/>
<rect x="1893" y="370" width="18.500" height="39" rx="4" fill="#545454"/><path d="M1893 390H1911.500" stroke="#3a3a3a"/>
<path d="M1898 383L1902 376.500L1906 383Z M1898 396.500L1902 403L1906 396.500Z" fill="#e0e0e0"/>

<!-- material selector -->
<rect x="1625" y="424" width="247" height="19" rx="4" fill="#282828" stroke="#222"/>
<rect x="1656" y="424" width="156" height="19" fill="#1d1d1d"/>
<path d="M1812 424H1868a4 4 0 0 1 4 4V439a4 4 0 0 1-4 4H1812Z" fill="#545454"/><path d="M1832 424V443M1852 424V443" stroke="#3a3a3a"/>
<use href="#matw" x="1636" y="433.500"/><use href="#c" x="1649" y="433.500"/>
<text x="1663" y="433">Material.003</text>
<path d="M1822 427.500L1828.500 430V435C1828.500 438 1825 440 1822 441C1819 440 1815.500 438 1815.500 435V430Z" fill="none" stroke="#8a8a8a" stroke-width="1.2"/>
<use href="#copy" x="1842" y="433.500"/><path d="M1858 429.500l8 8m0-8l-8 8" stroke="#d0d0d0" stroke-width="1.1"/>
<rect x="1881" y="424" width="30.500" height="19" rx="4" fill="#282828" stroke="#1d1d1d"/>
<g fill="none" stroke="#dcdcdc" stroke-width="1.2"><path d="M1887 428.500H1898L1892.500 438Z"/><rect x="1885.500" y="427" width="3" height="3"/><rect x="1896.500" y="427" width="3" height="3"/><rect x="1891" y="437" width="3" height="3"/></g><use href="#c" x="1905" y="434"/>

<!-- panels -->
<g fill="#3d3d3d"><rect x="1624" y="453" width="288" height="25" rx="4"/><rect x="1624" y="480" width="288" height="25" rx="4"/><rect x="1624" y="507" width="288" height="25" rx="4"/><rect x="1624" y="534" width="288" height="25" rx="4"/><rect x="1624" y="561" width="288" height="25" rx="4"/><rect x="1624" y="588" width="288" height="391" rx="4"/><rect x="1624" y="981" width="288" height="85" rx="4"/></g>
<use href="#cr" x="1637" y="466"/><text x="1646" y="466">Preview</text><use href="#grip" x="1900" y="465.500"/>
<use href="#cr" x="1637" y="493"/><text x="1646" y="493">Surface</text><use href="#grip" x="1900" y="492.500"/>
<use href="#cr" x="1637" y="520"/><text x="1646" y="520">Volume</text><use href="#grip" x="1900" y="519.500"/>
<use href="#cr" x="1637" y="547"/><text x="1646" y="547">Displacement</text><use href="#grip" x="1900" y="546.500"/>
<use href="#cr" x="1637" y="574"/><text x="1646" y="574">Thickness</text><use href="#grip" x="1900" y="573.500"/>
<use href="#c" x="1637" y="601"/><text x="1646" y="601">Settings</text><use href="#grip" x="1900" y="600.500"/>
<text x="1736" y="631" class="r">Pass Index</text>
<rect x="1746" y="622" width="157" height="18" rx="4" fill="#545454"/><text x="1824" y="631" class="c">0</text>
<!-- Surface sub -->
<use href="#c" x="1650" y="662"/><text x="1660" y="662">Surface</text>
<rect x="1624" y="673" width="288" height="244" fill="#383838"/>
<path d="M1624 913V917H1628ZM1912 913V917H1908Z" fill="#3d3d3d"/>
<text x="1737" y="692" class="r">Backface Culling</text>
<use href="#cb" x="1752" y="692"/><text x="1762" y="692">Camera</text>
<use href="#cb" x="1752" y="714"/><text x="1762" y="714">Shadow</text>
<use href="#cbon" x="1752" y="736"/><text x="1762" y="736" class="w">Light Probe Volume</text>
<text x="1737" y="761" class="r">Displacement</text>
<rect x="1746" y="752" width="157" height="19" rx="4" fill="#282828"/><text x="1753" y="761">Bump Only</text><use href="#c" x="1897" y="762"/>
<text x="1737" y="781" class="r" style="fill:#808080">Max Distance</text>
<path d="M1746 771H1903V786a4 4 0 0 1-4 4H1750a4 4 0 0 1-4-4Z" fill="#484848"/><text x="1824" y="780" class="c" style="fill:#808080">0 m</text>
<use href="#cbon" x="1752" y="806"/><text x="1762" y="806" class="w">Transparent Shadows</text>
<text x="1737" y="831" class="r">Render Method</text>
<rect x="1746" y="822" width="157" height="19" rx="4" fill="#282828"/><text x="1753" y="831">Dithered</text><use href="#c" x="1897" y="832"/>
<use href="#cb" x="1752" y="853"/><text x="1762" y="853">Raytraced Transmission</text>
<text x="1737" y="878" class="r">Thickness</text>
<rect x="1746" y="869" width="157" height="19" rx="4" fill="#282828"/><text x="1753" y="878">Sphere</text><use href="#c" x="1897" y="879"/>
<use href="#cb" x="1752" y="900"/><text x="1762" y="900">From Shadow</text>
<!-- Volume sub -->
<use href="#c" x="1650" y="931"/><text x="1660" y="931">Volume</text>
<rect x="1624" y="943" width="288" height="36" rx="4" fill="#383838"/>
<text x="1737" y="961" class="r">Intersection</text>
<rect x="1746" y="952" width="157" height="19" rx="4" fill="#282828"/><text x="1753" y="961">Fast</text><use href="#c" x="1897" y="962"/>
<!-- Line art -->
<use href="#c" x="1637" y="994"/><text x="1646" y="994">Line Art</text><use href="#grip" x="1900" y="993.500"/>
<use href="#cb" x="1744" y="1024"/><text x="1754" y="1024">Material Mask</text><circle cx="1894" cy="1024" r="2" fill="#e0e0e0"/>
<text x="1727" y="1049" class="r" style="fill:#808080">Masks</text>
<rect x="1738" y="1040" width="145" height="25" rx="4" fill="#484848"/><path d="M1772.500 1040V1065M1809.500 1040V1065M1846.500 1040V1065" stroke="#3c3c3c"/>
<circle cx="1894" cy="1049" r="2" fill="#777"/>
<rect x="1915" y="265" width="2.500" height="593" rx="1" fill="#555"/>

<!-- Property tabs -->
<rect x="1616" y="1059" width="303" height="20" fill="#181818"/>
<path d="M1589 651H1616V677H1594a5 5 0 0 1-5-5V656a5 5 0 0 1 5-5Z" fill="#303030"/>
<g stroke="#2a2a2a"><path d="M1590 291H1616M1590 442H1616M1590 476H1616M1590 684H1616"/></g>
<!-- tool -->
<g transform="translate(1603,275)" fill="#c8c8c8"><rect x="-7" y="-7" width="1.500" height="7"/><rect x="-8.500" y="0" width="4.500" height="7" rx="1"/><path d="M2-7L3-3H4L5-7L7-6L6-1L5 0V7H2V0L1-1L0-6Z"/></g>
<!-- render -->
<g transform="translate(1603,311)"><path d="M-7-5H-4V-7H1V-5H7V6H-7Z" fill="none" stroke="#c8c8c8" stroke-width="1.5"/><rect x="-5" y="-3" width="7" height="7" fill="#c8c8c8"/><rect x="3" y="-3" width="3" height="2" fill="#c8c8c8"/><rect x="3" y="1" width="3" height="2" fill="#c8c8c8"/></g>
<!-- output -->
<g transform="translate(1603,338)"><path d="M-7-5H7V1H5V-2H-5V1H-7Z" fill="#c8c8c8"/><rect x="-4" y="-1" width="8" height="7" fill="#c8c8c8"/><path d="M-2 4.500L0 1L2 4.500Z" fill="#222"/><rect x="-6" y="-7" width="12" height="2" fill="#c8c8c8"/></g>
<!-- viewlayer -->
<g transform="translate(1603,367)"><rect x="-3" y="-7" width="10" height="10" fill="#c8c8c8"/><path d="M-2 2L1-3L3 0L4-1L6 2Z" fill="#222"/><path d="M-5-4V5H4M-7-2V7H2" fill="none" stroke="#a8a8a8"/></g>
<!-- scene -->
<g transform="translate(1603,395)"><path d="M-3-7C-1-3 1 0 1 2A3.600 3.600 0 0 1-6 2C-6 0-4-3-3-7Z" fill="#c8c8c8"/><circle cx="5" cy="-5" r="2.300" fill="#c8c8c8"/><circle cx="3" cy="3.500" r="3.600" fill="#1d1d1d" stroke="#c8c8c8" stroke-width="1.100"/></g>
<!-- world -->
<g transform="translate(1603,423)"><circle r="6" fill="#5a3338"/><path d="M-4-4L0-3.500L1-.5L-2 1.500L-5-1ZM1 2L5 0L3 5ZM1-5L5-3L3-2Z" fill="#c25a66"/><circle r="6.600" fill="none" stroke="#a84e5a" stroke-width="1.200"/><path d="M-6.500 5.500A9 9 0 0 1 5.500-6.500" fill="none" stroke="#a84e5a" stroke-width="0"/></g>
<!-- collection -->
<g transform="translate(1603,460)" fill="none" stroke="#e0e0e0" stroke-width="1.200"><path d="M-7-6H7V-3H-7ZM-6-3V6H6V-3"/><path d="M-2 0H2" stroke-width="1.500"/></g>
<!-- object -->
<g transform="translate(1603,496)"><rect x="-4.500" y="-4.500" width="9" height="9" fill="#c28a4e"/><path d="M-4-7H-7V-4M4-7H7V-4M-4 7H-7V4M4 7H7V4" fill="none" stroke="#9c6c3c" stroke-width="1.200"/></g>
<!-- modifier -->
<g transform="translate(1603,524)"><path d="M-6 7L-7 5L-1-1C-2-5 1-8 6-7L3-4L4-2L6-2L8-5C9 0 5 3 1 2L-4 7Z" fill="#5680c2"/></g>
<!-- particles -->
<g transform="translate(1603,552)" fill="#5680c2"><circle cx="-5" cy="-4" r="2.800"/><circle cx="5" cy="-5" r="1.500"/><circle cx="5" cy="5" r="2.300"/><circle cx="-5" cy="6" r="1.300"/><path d="M-5-4H4M-5-4L5 5M-5-4V5" stroke="#5680c2" fill="none"/></g>
<!-- physics -->
<g transform="translate(1603,580)"><path d="M5-2A7 7 0 1 1-1-7" fill="none" stroke="#5680c2" stroke-width="1.400"/><circle cx="0" cy="0" r="3.200" fill="#5680c2"/><circle cx="5" cy="-5" r="2" fill="#5680c2"/></g>
<!-- constraints -->
<g transform="translate(1603,608)" fill="none" stroke="#5680c2" stroke-width="1.400"><path d="M-7 2C-7-3-1-7 5-7C8-7 7-2 5 1C3 5-3 7-5 7C-7 7-7 5-7 2Z"/><circle cx="-1" cy="1" r="2.500"/></g>
<!-- data -->
<g transform="translate(1603,637)" fill="none" stroke="#00b08a" stroke-width="1.300"><path d="M-5-5H5L0 6Z"/><rect x="-7" y="-7" width="3" height="3"/><rect x="4" y="-7" width="3" height="3"/><rect x="-1.500" y="5" width="3" height="3"/></g>
<!-- material -->
<use href="#mat" x="1603" y="664"/>
<!-- texture -->
<g transform="translate(1603,699)"><rect x="-7" y="-7" width="14" height="14" fill="#c25a66"/><path d="M-7-7H-4.200V-4.200H-7ZM-1.400-7H1.400V-4.200H-1.400ZM4.200-7H7V-4.200H4.200ZM-4.200-4.200H-1.400V-1.400H-4.200ZM1.400-4.200H4.200V-1.400H1.400ZM-7-1.400H-4.200V1.400H-7ZM-1.400-1.400H1.400V1.400H-1.400ZM4.200-1.400H7V1.400H4.200ZM-4.200 1.400H-1.400V4.200H-4.200ZM1.400 1.400H4.200V4.200H1.400ZM-7 4.200H-4.200V7H-7ZM-1.400 4.200H1.400V7H-1.400ZM4.200 4.200H7V7H4.200Z" fill="#3a2427"/></g>

<!-- status bar -->
<rect x="0" y="1059" width="1919" height="20" fill="#181818"/>
<g fill="none" stroke="#a8a8a8" stroke-width="1"><rect x="12.500" y="1062.500" width="11" height="15" rx="3.500"/><rect x="223.500" y="1062.500" width="11" height="15" rx="3.500"/><rect x="434.500" y="1062.500" width="11" height="15" rx="3.500"/></g>
<path d="M12 1062H18V1070H12Z" fill="#a8a8a8"/><rect x="227" y="1064" width="4" height="7" fill="#a8a8a8"/><path d="M440 1062H446V1070H440Z" fill="#a8a8a8"/>
<g transform="translate(1862,1070)" fill="none" stroke="#7a7a7a" stroke-width="1"><circle r="6.500"/><ellipse rx="3" ry="6.500"/><path d="M-6.500 0H6.500M-5.500-3H5.500M-5.500 3H5.500M-7-7L7 7"/></g>
<path d="M1878 1064V1076" stroke="#7a7a7a"/>
<text x="1882" y="1070" style="fill:#9a9a9a">4.2.1</text>
</svg>
</body></html>
